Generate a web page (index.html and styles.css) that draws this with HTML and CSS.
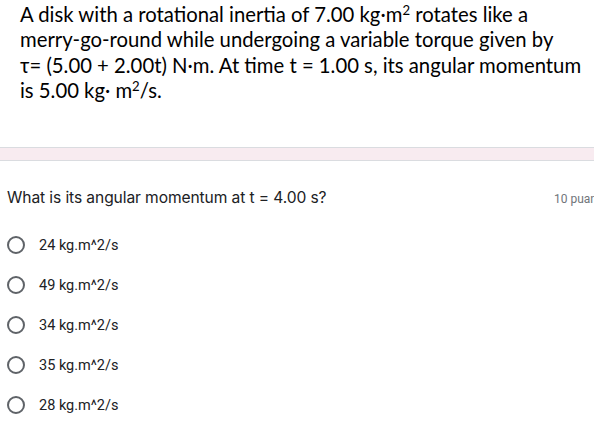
FILE: index.html
```html
<!DOCTYPE html>
<html>
<head>
<meta charset="utf-8">
<link rel="stylesheet" href="styles.css">
</head>
<body>
<div class="page">
  <div class="problem">
    A disk with a rotational inertia of 7.00 kg·m<sup>2</sup> rotates like a<br>
    merry-go-round while undergoing a variable torque given by<br>
    τ= (5.00 + 2.00t) N·m. At time t = 1.00 s, its angular momentum<br>
    is 5.00 kg· m<sup>2</sup>/s.
  </div>
  <div class="band"></div>
  <div class="question">
    <span class="qtext">What is its angular momentum at t = 4.00 s?</span>
    <span class="points">10 puan</span>
  </div>
  <ul class="options">
    <li class="option"><span class="radio"></span><span class="label">24 kg.m^2/s</span></li>
    <li class="option"><span class="radio"></span><span class="label">49 kg.m^2/s</span></li>
    <li class="option"><span class="radio"></span><span class="label">34 kg.m^2/s</span></li>
    <li class="option"><span class="radio"></span><span class="label">35 kg.m^2/s</span></li>
    <li class="option"><span class="radio"></span><span class="label">28 kg.m^2/s</span></li>
  </ul>
</div>
</body>
</html>
```
FILE: styles.css
```css
* { box-sizing: border-box; }
html, body { margin: 0; padding: 0; background: #fff; }
body { width: 594px; height: 421px; overflow: hidden; }
.page { width: 594px; }
.problem {
  font-family: Lato, "Open Sans", sans-serif;
  font-size: 20.3px;
  line-height: 25.3px;
  color: #000;
  padding: 2px 0 0 20px;
  height: 147px;
  white-space: nowrap;
}
.problem sup {
  font-size: 0.65em;
  line-height: 0;
  vertical-align: 0.55em;
}
.band {
  height: 14px;
  background: #f8ebf0;
  border-top: 1px solid #dadce0;
  border-bottom: 1px solid #dadce0;
}
.question {
  display: flex;
  justify-content: space-between;
  align-items: baseline;
  padding: 27px 0 0 7px;
  white-space: nowrap;
}
.qtext {
  font-family: Inter, Roboto, sans-serif;
  font-size: 15.6px;
  color: #202124;
  letter-spacing: -0.1px;
}
.points {
  font-family: Roboto, sans-serif;
  font-size: 12px;
  color: #70757a;
  width: 40px;
  overflow: hidden;
}
.options {
  list-style: none;
  margin: 0;
  padding: 18px 0 0 7px;
}
.option {
  display: flex;
  align-items: center;
  height: 40px;
}
.radio {
  width: 18px;
  height: 18px;
  border: 2px solid #5f6368;
  border-radius: 50%;
  flex: none;
}
.label {
  margin-left: 14px;
  font-family: Roboto, sans-serif;
  font-size: 14.5px;
  color: #202124;
}
```
